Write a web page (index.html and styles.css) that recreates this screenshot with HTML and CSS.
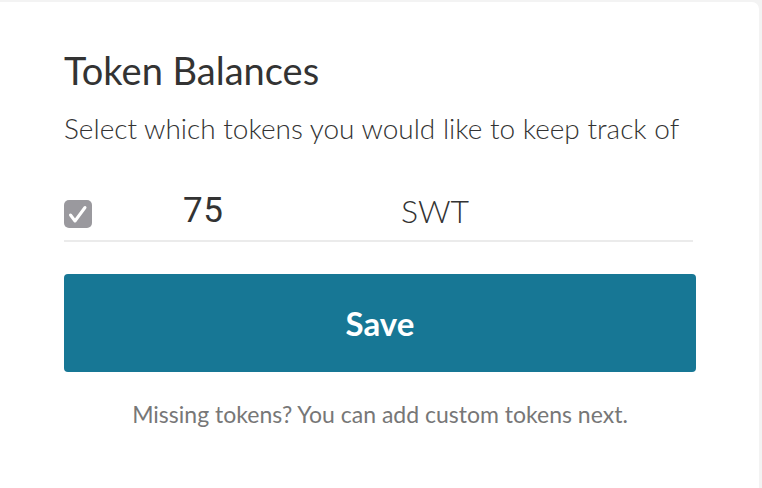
FILE: index.html
```html
<!DOCTYPE html>
<html>
<head>
<meta charset="utf-8">
<link rel="stylesheet" href="styles.css">
</head>
<body>
<div class="card">
  <h1 class="title">Token Balances</h1>
  <p class="subtitle">Select which tokens you would like to keep track of</p>
  <div class="token-row">
    <span class="check">
      <svg width="28" height="28" viewBox="0 0 28 28"><path d="M6.5 15 L11 21 L21 7.5" fill="none" stroke="#fff" stroke-width="3" stroke-linecap="round" stroke-linejoin="round"/></svg>
    </span>
    <span class="amount">75</span>
    <span class="symbol">SWT</span>
  </div>
  <button class="save">Save</button>
  <p class="hint">Missing tokens? You can add custom tokens next.</p>
</div>
</body>
</html>
```
FILE: styles.css
```css
html, body { margin: 0; padding: 0; }
body {
  background: #f3f3f3;
  font-family: Lato, "Open Sans", sans-serif;
  width: 762px;
  height: 488px;
  overflow: hidden;
}
.card {
  margin-top: 2px;
  width: 759px;
  height: 490px;
  background: #fff;
  border-radius: 0 7px 0 0;
  box-sizing: border-box;
  padding: 45px 66px 0 64px;
}
.title {
  margin: 0;
  font-size: 38px;
  font-weight: 400;
  color: #333;
  line-height: 46px;
}
.subtitle {
  margin: 18px 0 0;
  font-size: 28px;
  font-weight: 300;
  color: #333;
  line-height: 34px;
  white-space: nowrap;
}
.token-row {
  margin-top: 43px;
  display: flex;
  align-items: center;
  height: 52px;
  border-bottom: 2px solid #ebebeb;
}
.check {
  width: 28px;
  height: 28px;
  border-radius: 5px;
  background: #9a999e;
  display: flex;
  align-items: center;
  justify-content: center;
  margin-right: 91px;
}
.amount {
  width: 218px;
  font-family: Roboto, "Liberation Sans", Arial, sans-serif;
  font-size: 35px;
  font-weight: 400;
  letter-spacing: 0.5px;
  color: #333;
  line-height: 35px;
  margin-bottom: 8px;
}
.symbol {
  font-size: 32px;
  font-weight: 300;
  color: #333;
  line-height: 33px;
  margin-bottom: 8px;
}
.save {
  display: block;
  margin-top: 32px;
  width: 632px;
  height: 98px;
  border: 0;
  border-radius: 4px;
  background: #177795;
  color: #fff;
  font-family: Lato, sans-serif;
  font-size: 33px;
  font-weight: 700;
  padding: 0;
}
.hint {
  margin: 28px 0 0;
  width: 632px;
  text-align: center;
  font-size: 23px;
  font-weight: 400;
  color: #777;
  line-height: 28px;
  white-space: nowrap;
}
```
